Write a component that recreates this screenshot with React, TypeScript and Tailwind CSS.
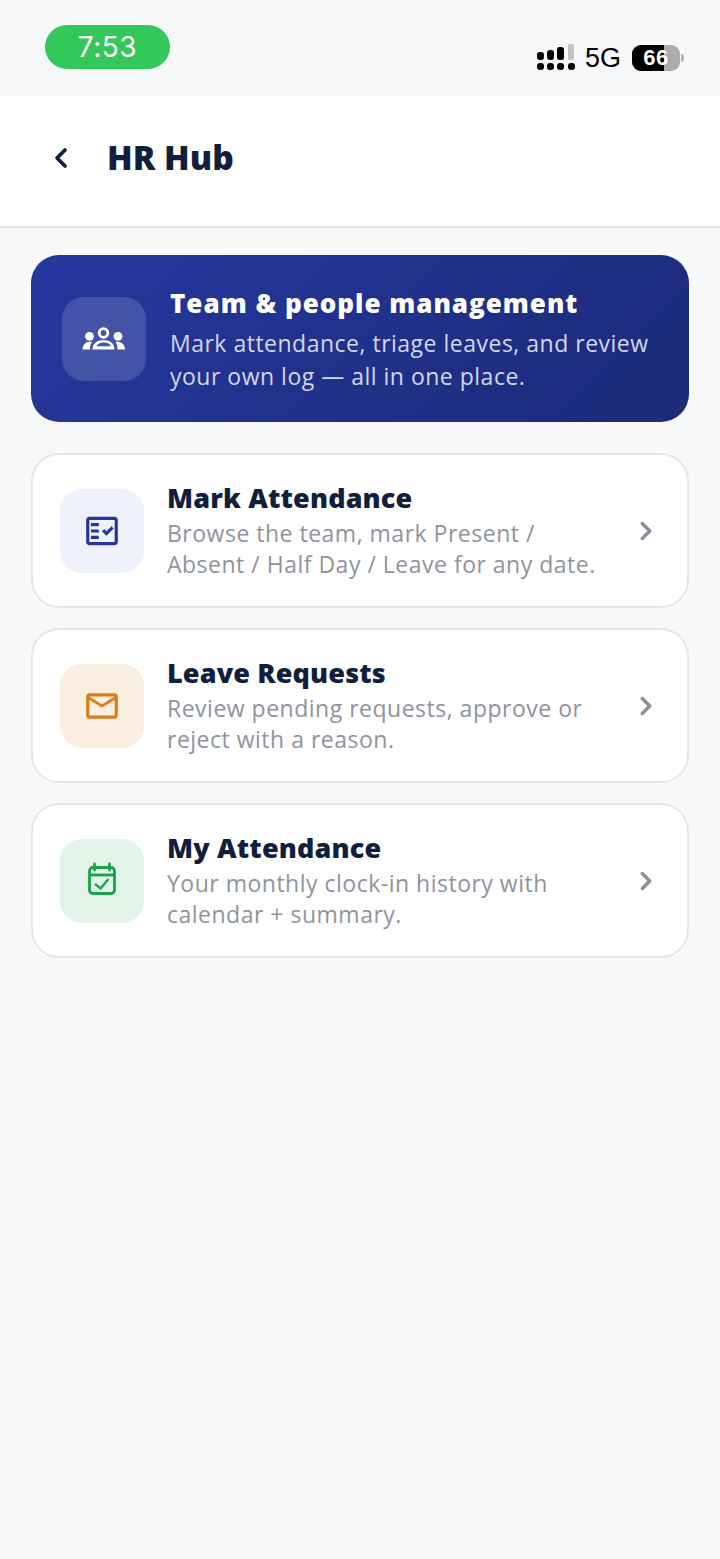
import { ChevronLeft, ChevronRight } from "lucide-react"
import { MdOutlineFactCheck, MdOutlineEmail } from "react-icons/md"
import type { ReactNode } from "react"

const CalendarIcon = () => (
  <svg width="32" height="36" viewBox="0 0 32 36" fill="none" stroke="currentColor" className="mb-[4px] text-[#17a34a]">
    <rect x="3.500" y="6.500" width="25" height="26" rx="3.500" strokeWidth="2.800" />
    <path d="M3.500 14h25" strokeWidth="2.800" />
    <path d="M8.500 3v6M23.500 3v6" strokeWidth="2.800" strokeLinecap="round" />
    <path d="M9 23l5.700 4.500L22.500 18" strokeWidth="2.300" />
  </svg>
)

const MENU_ITEMS: { title: string; lines: string[]; tint: string; icon: ReactNode }[] = [
  {
    title: "Mark Attendance",
    lines: ["Browse the team, mark Present /", "Absent / Half Day / Leave for any date."],
    tint: "bg-[#eff1fd]",
    icon: <MdOutlineFactCheck size={38} className="text-[#25369c]" />,
  },
  {
    title: "Leave Requests",
    lines: ["Review pending requests, approve or", "reject with a reason."],
    tint: "bg-[#faeee1]",
    icon: <MdOutlineEmail size={38} className="text-[#d97c16]" />,
  },
  {
    title: "My Attendance",
    lines: ["Your monthly clock-in history with", "calendar + summary."],
    tint: "bg-[#e2f4ea]",
    icon: <CalendarIcon />,
  },
]

const SignalIcon = () => (
  <svg width="38" height="28" viewBox="0 0 38 28" className="fill-black">
    <rect x="0" y="8" width="7" height="8" rx="3" />
    <rect x="10" y="6" width="7" height="10" rx="3" />
    <rect x="20" y="3" width="7" height="13" rx="2.5" />
    <rect x="31" y="0" width="6" height="16" rx="1.5" className="fill-[#c4c4c4]" />
    <rect x="0" y="19" width="7" height="7" rx="3" />
    <rect x="10" y="19" width="7" height="7" rx="3" />
    <rect x="20" y="19" width="7" height="7" rx="3" />
    <rect x="31" y="19" width="7" height="7" rx="3" />
  </svg>
)

const TeamIcon = () => (
  <svg width="44" height="23" viewBox="0 0 44 23" className="fill-white">
    <circle cx="21.5" cy="6" r="4.300" fill="none" stroke="white" strokeWidth="2.800" />
    <path
      fillRule="evenodd"
      d="M10.500 22.500c0-6 4.500-9.500 11-9.500s11 3.500 11 9.500zM14.500 19.200h14.500c-.8-2.500-3.300-3.800-7.200-3.800s-6.500 1.300-7.300 3.800z"
    />
    <circle cx="7.500" cy="9.300" r="4.400" />
    <path d="M.5 22.500c0-5 3.200-8.300 9.500-7.800-1.500 2-2 4.800-2 7.800z" />
    <circle cx="36" cy="9.300" r="4.400" />
    <path d="M43 22.500c0-5-3.200-8.300-9.500-7.800 1.500 2 2 4.800 2 7.800z" />
  </svg>
)

const Battery = () => (
  <div className="flex items-center">
    <div className="relative flex h-[26px] w-[48px] items-center justify-center overflow-hidden rounded-[9px] bg-[#acacac]">
      <div className="absolute inset-y-0 left-0 w-[32px] bg-black" />
      <span className="relative text-[22px] font-bold leading-none tracking-[0.5px] text-white">66</span>
    </div>
    <div className="ml-[1px] h-[8px] w-[3px] rounded-r-full bg-[#b5b5b5]" />
  </div>
)

const StatusBar = () => (
  <div className="flex h-[96px] items-start justify-between pl-[45px] pr-[36px] font-['Liberation_Sans',sans-serif]">
    <div className="mt-[25px] flex h-[44px] w-[125px] items-center justify-center rounded-full bg-[#34c759] font-['Inter',sans-serif] text-[28px] font-normal leading-none tracking-[0.5px] text-white">
      7:53
    </div>
    <div className="mt-[44px] flex items-center">
      <SignalIcon />
      <span className="ml-[10px] mr-[11px] text-[27px] leading-none text-black">5G</span>
      <Battery />
    </div>
  </div>
)

export default function App() {
  return (
    <main className="min-h-[1559px] bg-[#f7f8fa] font-['Open_Sans','Noto_Sans',sans-serif]">
      <StatusBar />

      <header className="flex h-[132px] items-center border-b-2 border-[#e4e6eb] bg-white pb-[6px] pl-[45px]">
        <ChevronLeft size={32} strokeWidth={2.8} className="text-[#0f1f3d]" />
        <h1 className="ml-[30px] text-[33.5px] font-extrabold leading-none text-[#0f1f3d]">HR Hub</h1>
      </header>

      <div className="flex flex-col px-[31px] pt-[27px]">
        <section className="flex h-[167px] items-center rounded-[28px] bg-linear-135 from-[#26389f] to-[#1b2a78] pl-[31px]">
          <div className="flex size-[84px] items-center justify-center rounded-[22px] bg-white/15">
            <TeamIcon />
          </div>
          <div className="ml-[24px]">
            <h2 className="text-[26px] font-extrabold leading-[36px] tracking-[1px] text-white">Team &amp; people management</h2>
            <p className="mt-[6px] text-[23px] leading-[33px] tracking-[0.5px] text-[#d3d7ec]">
              Mark attendance, triage leaves, and review
              <br />
              your own log — all in one place.
            </p>
          </div>
        </section>

        <div className="mt-[31px] flex flex-col gap-[20px]">
          {MENU_ITEMS.map((item) => (
            <section
              key={item.title}
              className="flex h-[155px] items-center rounded-[28px] border-2 border-[#e4e6eb] bg-white pl-[27px] pr-[26px]"
            >
              <div className={`flex size-[84px] shrink-0 items-center justify-center rounded-[22px] ${item.tint}`}>
                {item.icon}
              </div>
              <div className="ml-[23px] flex-1 pb-[2px]">
                <h3 className="text-[27px] font-extrabold leading-[36px] tracking-[0.15px] text-[#0f1f3d]">{item.title}</h3>
                <p className="mt-[2px] text-[23px] leading-[31px] tracking-[0.5px] text-[#8f939d]">
                  {item.lines[0]}
                  <br />
                  {item.lines[1]}
                </p>
              </div>
              <ChevronRight size={30} strokeWidth={2.8} className="text-[#8b8f9a]" />
            </section>
          ))}
        </div>
      </div>
    </main>
  )
}
